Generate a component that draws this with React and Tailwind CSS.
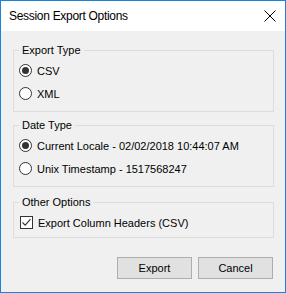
import React from 'react'

const font = { fontFamily: '"Liberation Sans", Arial, sans-serif' }

function Radio({ checked, label }) {
  return (
    <div className="flex items-center h-[23px] pl-[5px]">
      <div className="w-[13px] h-[13px] rounded-full border border-[#333333] bg-white flex items-center justify-center">
        {checked && <div className="w-[7px] h-[7px] rounded-full bg-[#333333]" />}
      </div>
      <span className="ml-[5px] text-[11px] text-black leading-[14px]">{label}</span>
    </div>
  )
}

function Check({ checked, label }) {
  return (
    <div className="flex items-center h-[23px] pl-[6px]">
      <div className="w-[13px] h-[13px] border border-[#333333] bg-white flex items-center justify-center">
        {checked && (
          <svg width="11" height="11" viewBox="0 0 11 11">
            <path d="M1.5 5.5 L4.2 8.2 L9.5 2.2" fill="none" stroke="#333333" strokeWidth="1.1" />
          </svg>
        )}
      </div>
      <span className="ml-[5px] text-[11px] text-black leading-[14px]">{label}</span>
    </div>
  )
}

function Group({ title, children, className }) {
  return (
    <fieldset className={"w-[261px] border border-[#dcdcdc] " + className}>
      <legend className="ml-[5px] px-[3px] text-[11px] leading-[14px] text-black">{title}</legend>
      {children}
    </fieldset>
  )
}

export default function App() {
  return (
    <div className="w-[286px] h-[293px] border border-[#1883d7] bg-[#f0f0f0] flex flex-col" style={font}>
      {/* title bar */}
      <div className="h-[30px] bg-white flex items-center justify-between pl-[8px] pr-[9px]">
        <span className="text-[12px] tracking-[-0.3px] text-black">Session Export Options</span>
        <svg width="12" height="12" viewBox="0 0 12 12">
          <path d="M0.5 0.5 L11.5 11.5 M11.5 0.5 L0.5 11.5" stroke="#000" strokeWidth="1" />
        </svg>
      </div>

      <div className="flex flex-col pl-[12px]">
        <Group title="Export Type" className="mt-[12px] pt-[2px] pb-[6px]">
          <Radio checked label="CSV" />
          <Radio label="XML" />
        </Group>

        <Group title="Date Type" className="mt-[6px] pt-[2px] pb-[6px]">
          <Radio checked label="Current Locale - 02/02/2018 10:44:07 AM" />
          <Radio label="Unix Timestamp - 1517568247" />
        </Group>

        <Group title="Other Options" className="mt-[8px] pt-[2px] pb-[3px]">
          <Check checked label="Export Column Headers (CSV)" />
        </Group>

        <div className="flex justify-end gap-[6px] pr-[12px] mt-[19px]">
          <button className="w-[75px] h-[22px] bg-[#e1e1e1] border border-[#adadad] text-[11px] text-black">Export</button>
          <button className="w-[75px] h-[22px] bg-[#e1e1e1] border border-[#adadad] text-[11px] text-black">Cancel</button>
        </div>
      </div>
    </div>
  )
}
